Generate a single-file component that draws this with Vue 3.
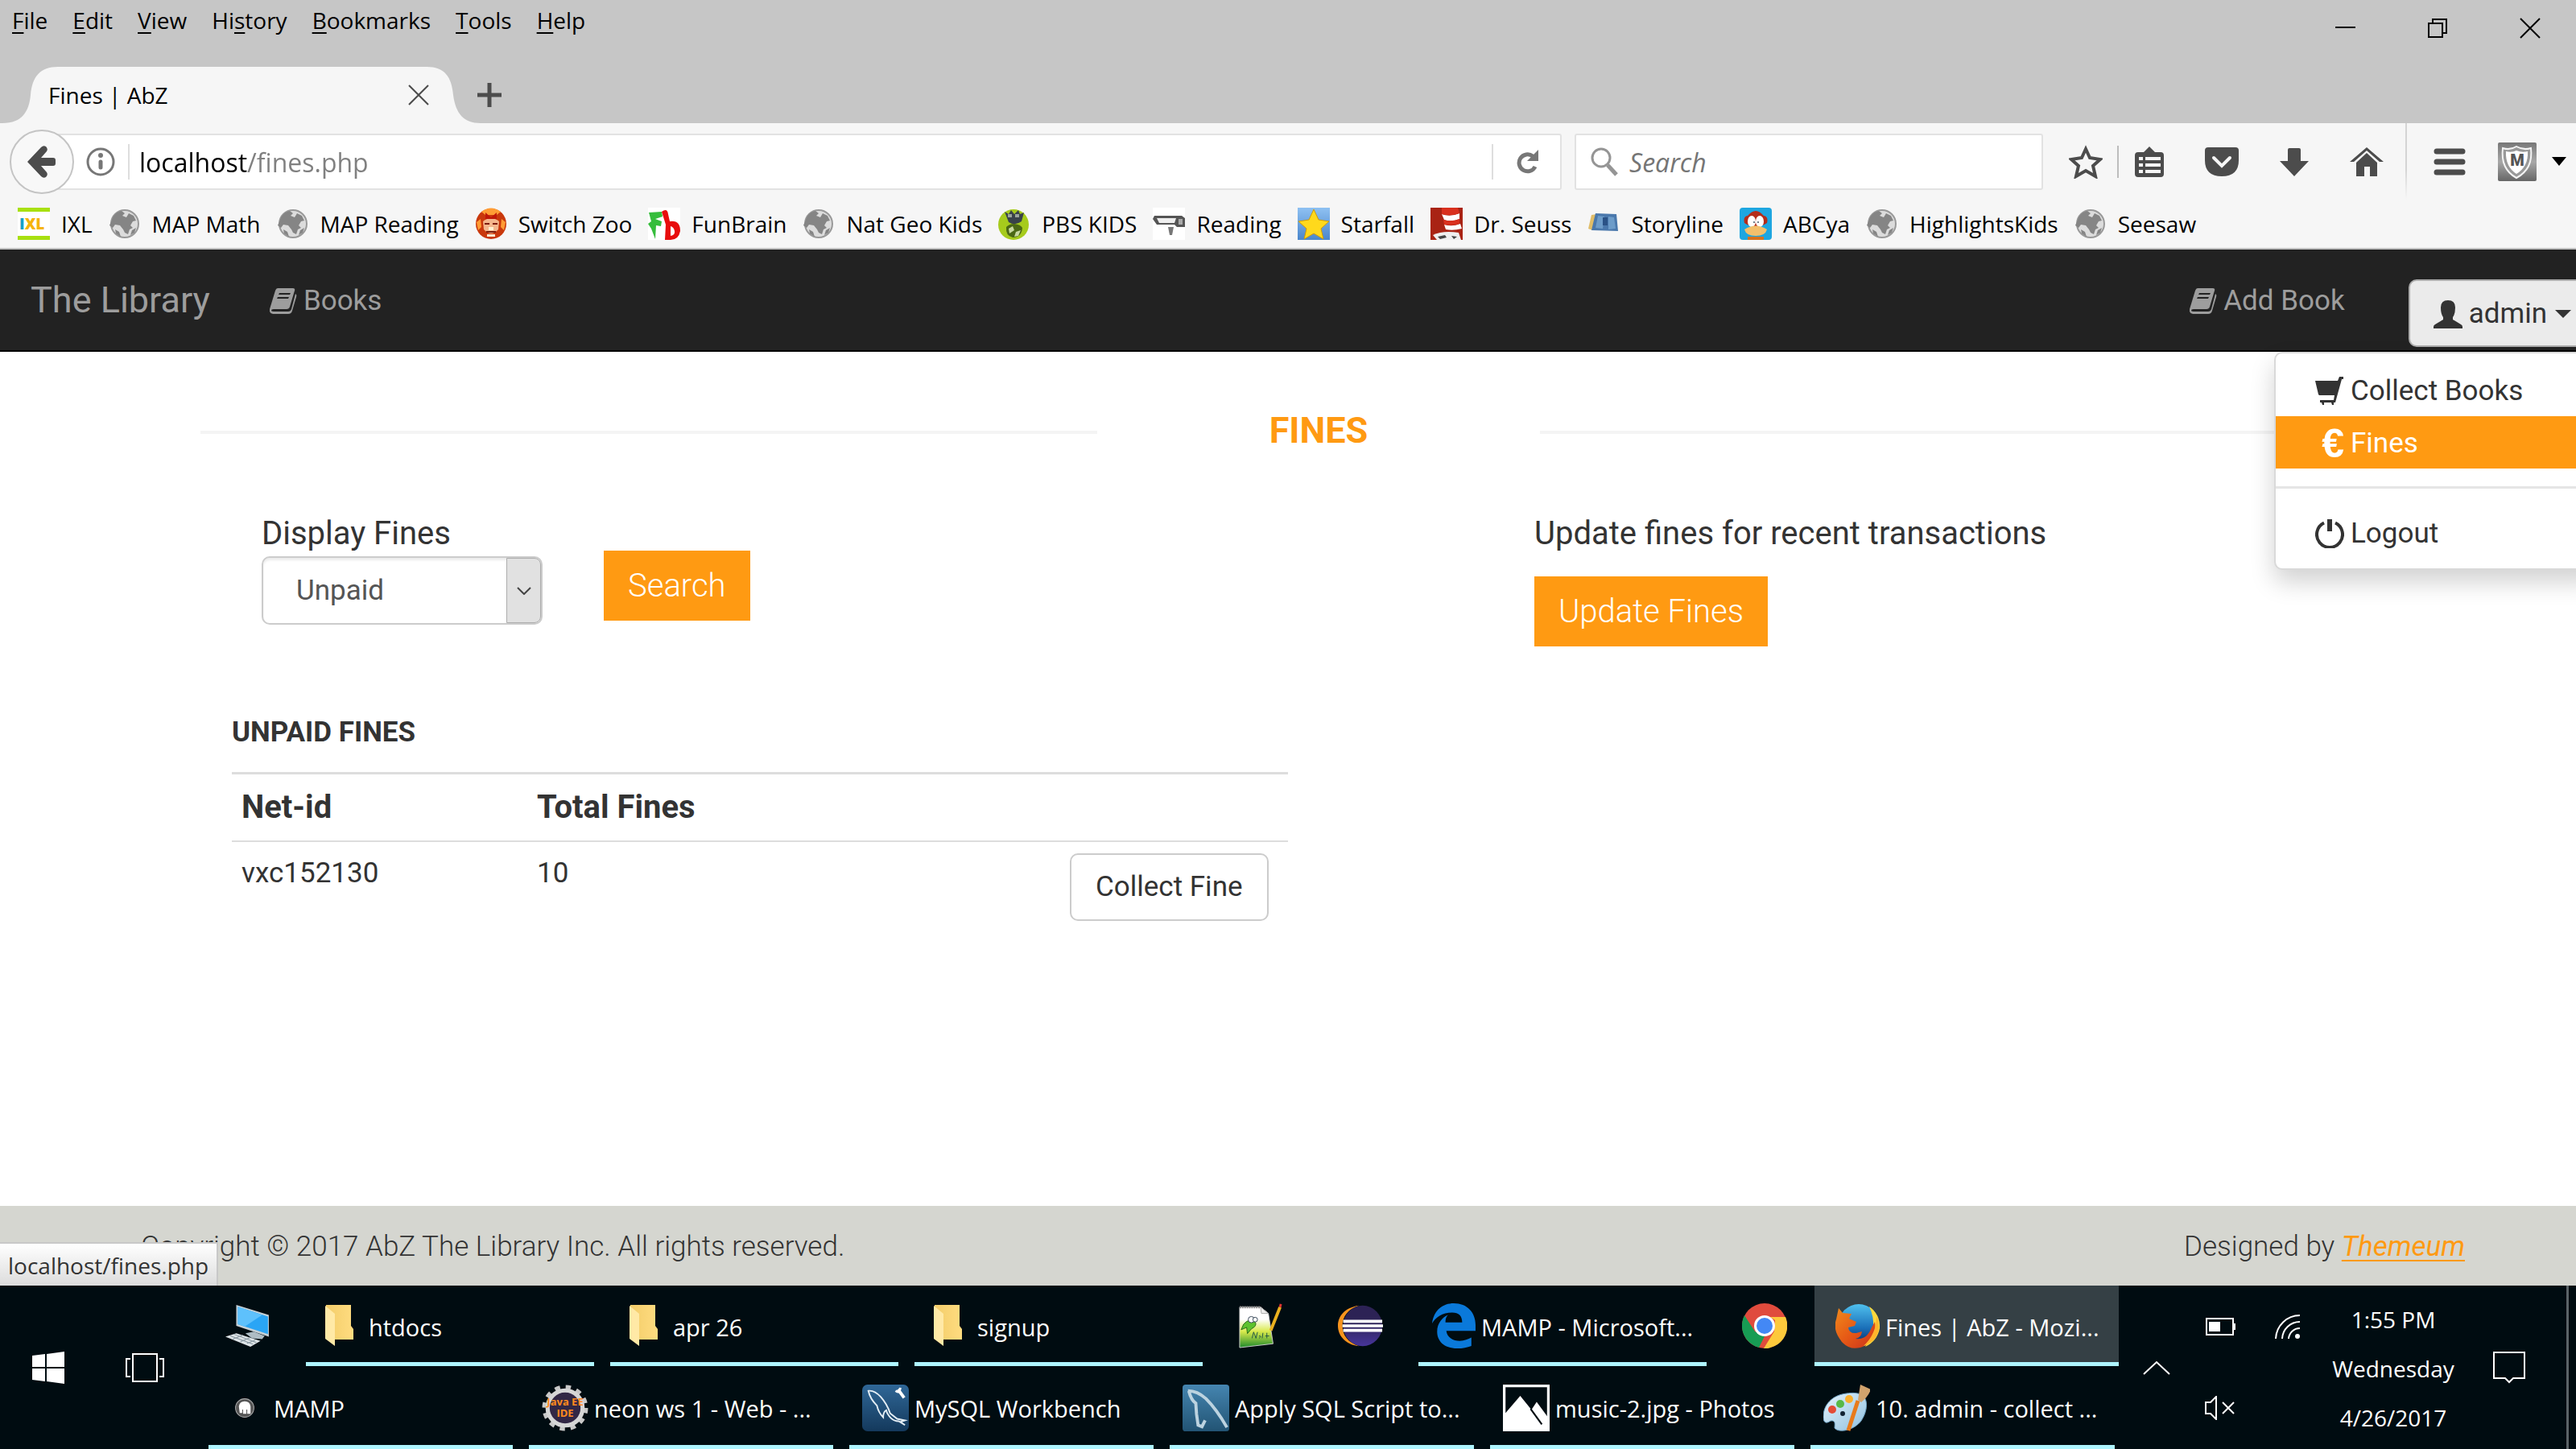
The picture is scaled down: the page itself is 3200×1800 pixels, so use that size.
<script setup>
import { ref } from 'vue'

const menus = [
  ['', 'F', 'ile'], ['', 'E', 'dit'], ['', 'V', 'iew'], ['Hi', 's', 'tory'],
  ['', 'B', 'ookmarks'], ['', 'T', 'ools'], ['', 'H', 'elp'],
]

const bookmarks = [
  { icon: 'ixl', label: 'IXL' },
  { icon: 'globe', label: 'MAP Math' },
  { icon: 'globe', label: 'MAP Reading' },
  { icon: 'zoo', label: 'Switch Zoo' },
  { icon: 'funbrain', label: 'FunBrain' },
  { icon: 'globe', label: 'Nat Geo Kids' },
  { icon: 'pbs', label: 'PBS KIDS' },
  { icon: 'reading', label: 'Reading' },
  { icon: 'starfall', label: 'Starfall' },
  { icon: 'seuss', label: 'Dr. Seuss' },
  { icon: 'storyline', label: 'Storyline' },
  { icon: 'abcya', label: 'ABCya' },
  { icon: 'globe', label: 'HighlightsKids' },
  { icon: 'globe', label: 'Seesaw' },
]

const topTasks = [
  { icon: 'computer', name: 'This PC' },
  { icon: 'folder', label: 'htdocs', open: true, roomy: true },
  { icon: 'folder', label: 'apr 26', open: true, roomy: true },
  { icon: 'folder', label: 'signup', open: true, roomy: true },
  { icon: 'notepad', name: 'Notepad++' },
  { icon: 'eclipse', name: 'Eclipse' },
  { icon: 'edge', label: 'MAMP - Microsoft...', open: true },
  { icon: 'chrome', name: 'Chrome' },
  { icon: 'firefox', label: 'Fines | AbZ - Mozi...', open: true, active: true },
]

const bottomTasks = [
  { icon: 'mamp', label: 'MAMP' },
  { icon: 'javaee', label: 'neon ws 1 - Web - ...' },
  { icon: 'workbench', label: 'MySQL Workbench' },
  { icon: 'sqlscript', label: 'Apply SQL Script to...' },
  { icon: 'photos', label: 'music-2.jpg - Photos' },
  { icon: 'paint', label: '10. admin - collect ...' },
]

const fines = [{ netId: 'vxc152130', total: 10 }]
const address = ref('localhost/fines.php')
const query = ref('')
const status = ref('Unpaid')
</script>

<template>
  <svg class="sprite" aria-hidden="true">
    <defs>
      <linearGradient id="gFolder" x1="0" x2="1"><stop offset="0" stop-color="#f3cd6a" /><stop offset="1" stop-color="#ffdc80" /></linearGradient>
      <linearGradient id="gStar" x1="0" y1="0" x2="0" y2="1"><stop offset="0" stop-color="#8fc1f2" /><stop offset="1" stop-color="#4a86cc" /></linearGradient>
      <linearGradient id="gSql" x1="0" y1="0" x2="0" y2="1"><stop offset="0" stop-color="#2f6797" /><stop offset="1" stop-color="#14395c" /></linearGradient>
      <linearGradient id="gSql2" x1="0" y1="0" x2="0" y2="1"><stop offset="0" stop-color="#4585b0" /><stop offset="1" stop-color="#225474" /></linearGradient>
      <linearGradient id="gFox" x1="0" y1="0" x2="1" y2="1"><stop offset="0" stop-color="#f08a1c" /><stop offset=".5" stop-color="#e65a16" /><stop offset="1" stop-color="#c9301c" /></linearGradient>
      <linearGradient id="gSea" x1="0" y1="0" x2="0" y2="1"><stop offset="0" stop-color="#4fc0ee" /><stop offset=".6" stop-color="#1a6fb8" /><stop offset="1" stop-color="#0b2c63" /></linearGradient>
      <linearGradient id="gNote" x1="0" y1="0" x2="0" y2="1"><stop offset=".3" stop-color="#ffffff" /><stop offset=".6" stop-color="#d9ea4c" /><stop offset="1" stop-color="#1f8a2c" /></linearGradient>
      <linearGradient id="gEcl" x1="0" y1="0" x2="0" y2="1"><stop offset=".4" stop-color="#2c2255" /><stop offset="1" stop-color="#47359a" /></linearGradient>
      <linearGradient id="gShield" x1="0" y1="0" x2="0" y2="1"><stop offset="0" stop-color="#777" /><stop offset=".5" stop-color="#a8a8a8" /><stop offset="1" stop-color="#666" /></linearGradient>
      <linearGradient id="gPal" x1="0" y1="0" x2="1" y2="1"><stop offset="0" stop-color="#e6f3fb" /><stop offset="1" stop-color="#8fc0e0" /></linearGradient>
    </defs>
    <symbol id="ixl" viewBox="0 0 40 40"><path fill="#fff" d="M0 0h40v40H0z" /><path fill="#a8e010" d="M0 0h40v5H0zM0 35h40v5H0z" /></symbol>
    <symbol id="globe" viewBox="0 0 40 40"><circle cx="20" cy="20" r="17" fill="#dcdcdc" stroke="#999" stroke-width="2" /><path fill="#858585" d="M4 15C6 8 11 5 16 4l4 3-3 3 5 2 3-5 6 3 3 6-4 1-3 5 3 3-4 2-2 6-4-2-2-4-4-5-6-1-3 4-4-3zM29 28l5-3-2 6-5 3zM8 27l5 3 2 6-6-4z" /></symbol>
    <symbol id="zoo" viewBox="0 0 40 40"><circle cx="20" cy="20" r="19" fill="#c9380c" /><path fill="#ff9c34" d="M8 5Q20-4 32 5L27 9H13zM2 18l5-4 1 10-4 4zM38 18l-5-4-1 10 4 4z" /><path fill="#f4b68c" d="M10 17q10-8 20 0l-1 10q-9 10-18 0z" /><path fill="#c01808" d="M13 6l7 6 7-6v8H13z" /><path fill="#7d1c0c" d="M12 19h6v2h-6zM22 19h6v2h-6zM14 29h12v2H14z" /><path fill="#fff0d0" d="M17 24h6v4h-6zM15 33h10v3H15z" /></symbol>
    <symbol id="funbrain" viewBox="0 0 40 40"><path fill="#fff" d="M0 0h40v40H0z" /><path fill="#36bd3c" d="M1 6l16-1 1 6-9 3 8 3-1 6-6-1-1 17-5-13-4-6 4-3z" /><path fill="#e80d0d" fill-rule="evenodd" d="M17 5q7-5 8 3l2 9q13-2 13 12-2 11-12 11h-7l1-19zM28 23v12q6-1 5-6-1-5-5-6z" /></symbol>
    <symbol id="pbs" viewBox="0 0 40 40"><circle cx="19" cy="21" r="19" fill="#a6cb1c" /><path fill="#39424a" d="M8 5l5 3 3-5 4 5 5-5 2 5 5-2-3 11q-8 6-16 1z" /><path fill="#9aa49c" d="M12 8h5v4h-5zM21 8h5v4h-5z" /><path fill="#4b6815" d="M10 24q4-4 10-4 8 1 10 5-1 12-12 12-9-2-8-13z" /><path fill="#c8d8a0" d="M13 26l5-3 2 5-6 4zM22 30l6-2-3 7-5 1z" /></symbol>
    <symbol id="reading" viewBox="0 0 40 40"><path fill="#fff" d="M0 0h40v40H0z" /><path fill="#555" d="M2 10h34l4 3v11H30l-3-3H5l-5-7z" /><path fill="#eee" d="M5 13h24l-2 6H8z" /><path fill="#aaa" d="M32 14h5v7h-5z" /><path fill="#777" d="M19 24h7l-2 10h-3z" /></symbol>
    <symbol id="starfall" viewBox="0 0 40 40"><path fill="url(#gStar)" d="M0 0h40v40H0z" /><path fill="#ffd91c" stroke="#cf9b08" stroke-width="1" d="M20 2l6 13 13 2-10 9 3 13-12-7-12 7 3-13L1 17l13-2z" /></symbol>
    <symbol id="seuss" viewBox="0 0 40 40"><path fill="#a92314" d="M0 0h40v40H0z" /><path fill="#fff" d="M14 8q10 4 22-1v7q-10 4-19 1zM17 21q10 3 20-1l2 6q-11 3-20 1z" /><path fill="#d9301e" d="M14 0h20l2 7q-10 4-22 1zM16 15q10 3 20-1v6q-9 3-19 1z" /><path fill="#eee" d="M3 34q12-6 32-3l3 9H8z" /><path fill="#444" d="M9 36l9-2 2 3-8 2zM26 35l7 1-4 3z" /></symbol>
    <symbol id="storyline" viewBox="0 0 40 40"><path fill="#e0bd68" d="M5 9l7-1-6 20-5-2z" /><path fill="#4a78ac" d="M10 7l26 1 2 21-33-1z" /><path fill="#6d9cc9" d="M13 10l8 1-2 15-9-1zM26 11l7 1 2 14-9 1z" /><path fill="#2a5286" d="M19 12h6v10h-6z" /></symbol>
    <symbol id="abcya" viewBox="0 0 40 40"><rect width="40" height="40" rx="4" fill="#1ea6e0" /><path fill="#b52d1a" d="M10 10q10-12 20 0 6 1 4 9-5 4-14 4T6 19q-2-8 4-9z" /><ellipse cx="15" cy="17" rx="5" ry="7" fill="#fff" /><ellipse cx="25" cy="17" rx="5" ry="7" fill="#fff" /><path fill="#f3c06c" d="M6 27q14-9 28 0-2 8-14 8T6 27z" /><path fill="#d8721c" d="M10 36h20v4H10z" /><circle cx="18" cy="18" r="1" fill="#456" /><circle cx="23" cy="18" r="1" fill="#456" /></symbol>

    <symbol id="book" viewBox="0 0 34 32"><path fill="currentColor" fill-rule="evenodd" d="M10 0H29Q32 0 31 3L25 23Q24 26 21 26H5Q2 26 2 28 3 29 5 29H23Q26 29 27 26L32 7Q34 8 33 11L28 28Q27 32 23 32H4Q-1 31 0 26L7 3Q8 0 10 0zM12 6l-1 2h14l1-2zM10 11l-1 2h14l1-2z" /></symbol>
    <symbol id="user" viewBox="0 0 36 35"><path fill="currentColor" d="M18 0q9 0 9 9 0 8-3 12v3l10 6q2 1 2 3v2H0v-2q0-2 2-3l10-6v-3Q9 17 9 9q0-9 9-9z" /></symbol>
    <symbol id="cart" viewBox="0 0 36 35"><path fill="currentColor" d="M0 5H28L30 0H35V3H33L25 32H23V35H21L20 32H11V35H9L8 32H6V29H23L24 23H5L4 22z" /></symbol>
    <symbol id="power" viewBox="0 0 36 36"><path fill="none" stroke="currentColor" stroke-width="4" d="M11 4.500A16 16 0 1 0 25 4.500" /><path fill="currentColor" d="M15 0h6v15h-6z" /></symbol>

    <symbol id="computer" viewBox="0 0 54 50"><path fill="#c5d0d6" d="M13 0l39 12v26L13 25z" /><path fill="#2aa5f5" d="M15 2l36 12v21L15 23z" /><path fill="#5ec1fc" d="M15 2l29 10-21 14-8-3z" /><path fill="#aebcc4" d="M24 34l10-2 13 5-3 4-12-1z" /><path fill="#dfe5e8" d="M0 38l13-4 29 9-12 7z" /><path stroke="#8796a0" fill="none" d="M6 37l27 10M10 35l27 10M9 41l12-5M18 44l12-5M26 46l10-4" /></symbol>
    <symbol id="folder" viewBox="0 0 36 52"><path fill="url(#gFolder)" d="M1 0h31v26l3 4v13H1z" /><path fill="#ffe9a6" d="M0 1l12 10v40L0 42z" /></symbol>
    <symbol id="notepad" viewBox="0 0 56 58"><path fill="url(#gNote)" stroke="#ccc" d="M1 5h27l10 8 6 39L1 57z" /><path fill="#eee" stroke="#aaa" d="M28 5l10 8h-9z" /><path stroke="#888" stroke-dasharray="2 1" stroke-width="3" d="M1 5h27" /><path fill="#5ec22e" stroke="#2b6a18" d="M6 27q8-9 15-3 3 5-5 9l-5 6-1-8-7 3z" /><circle cx="16" cy="21" r="4" fill="#fff" stroke="#345" /><circle cx="21" cy="21" r="3" fill="#fff" stroke="#345" /><path fill="none" stroke="#254" d="M17 45l2-8 3 8 2-8M26 42q4 0 0 3M31 38l-1 7M34 42h5M36 38v7" /><path stroke="#eab01e" stroke-width="4" d="M41 35L53 5" /><path stroke="#d33" stroke-width="3" d="M53 5l1-4" /></symbol>
    <symbol id="eclipse" viewBox="0 0 60 56"><path fill="#f7941e" d="M28 1C8 4 0 16 0 28s9 25 28 27C13 50 6 40 6 28S13 6 28 1z" /><ellipse cx="33" cy="28" rx="26" ry="27" fill="url(#gEcl)" /><path fill="#fff" d="M7 20h52v4H7zM6 26h54v4H6zM7 32h52v4H7z" /></symbol>
    <symbol id="edge" viewBox="0 0 52 54"><path fill="#0a79da" d="M0 24C2 8 13 0 26 0c16 0 26 11 26 26v7H17c1 8 8 12 16 12 6 0 10-2 14-4v10c-5 2-10 3-17 3C14 54 6 45 6 34c0-10 6-17 13-20-3 3-3 6-3 9h20c0-8-4-12-12-12C12 11 4 17 0 24z" /></symbol>
    <symbol id="chrome" viewBox="0 0 56 56"><circle cx="28" cy="28" r="28" fill="#e04b3d" /><path fill="#179c54" d="M3 15L16 35l12 6-7 14A28 28 0 0 1 3 15z" /><path fill="#fdc93c" d="M54 17A28 28 0 0 1 27 56l13-21 1-14-6-4z" /><circle cx="28" cy="28" r="13" fill="#fff" /><circle cx="28" cy="28" r="10" fill="#4388f5" /></symbol>
    <symbol id="firefox" viewBox="0 0 56 56"><circle cx="29" cy="26" r="25" fill="url(#gSea)" /><path fill="#ffd83c" d="M42 4q14 10 13 27-3 16-18 23 8-12 10-24 1-14-5-26z" /><path fill="url(#gFox)" d="M4 6l5 6 11 1-3 6 9 4-2 5-8 2q1 8 10 7l7-2q-1 8-8 9 14 2 20-14l4-7q3 20-11 29-17 9-29-3Q-4 34 1 20z" /><path fill="#ffb42c" d="M51 16q7 16-3 29-8 7-13 8 16-15 16-37z" /></symbol>
    <symbol id="mamp" viewBox="0 0 56 56"><circle cx="28" cy="28" r="11" fill="#555" stroke="#aaa" stroke-width="1" /><path fill="#fff" d="M21 26q1-6 7-6t7 6v9h-4v-5h-1v5h-4v-5h-1v4h-3z" /></symbol>
    <symbol id="javaee" viewBox="0 0 56 56"><circle cx="28" cy="28" r="24" fill="none" stroke="#c8c8c8" stroke-width="7" stroke-dasharray="6 6.560" /><circle cx="28" cy="28" r="21" fill="#322745" stroke="#d6d6d6" stroke-width="5" /></symbol>
    <symbol id="workbench" viewBox="0 0 60 60"><rect width="60" height="60" rx="7" fill="url(#gSql)" /><path fill="none" stroke="#e4eef5" stroke-width="2" d="M8 8q8-1 16 8 8 9 12 21l9 7 10 2-6 2 6 4-8-5q-6 0-10-4-5-5-6-10-4 2-4 9-6-6-8-15Q10 18 8 8z" /><path stroke="#fff" stroke-width="4" d="M46 6l8 11" /><path stroke="#fff" fill="none" stroke-width="3" d="M43 8q5 4 6-4" /></symbol>
    <symbol id="sqlscript" viewBox="0 0 60 60"><rect width="60" height="60" rx="4" fill="url(#gSql2)" /><path fill="none" stroke="#bcd3e0" stroke-width="4" d="M7 8q12 0 23 10 14 14 27 37M8 8q3 12 9 16l1 14 2 14 5 2 4-8" /></symbol>
    <symbol id="photos" viewBox="0 0 54 54"><path fill="none" stroke="#fff" stroke-width="3" d="M1.500 1.500h51v51h-51z" /><path fill="#fff" d="M2 34L20 13l13 16 6-9 14 19v13H2z" /><path stroke="#000c11" stroke-width="2" d="M32 28l13 18" /></symbol>
    <symbol id="paint" viewBox="0 0 58 58"><path fill="url(#gPal)" stroke="#6fa3c4" d="M29 11C11 13 0 25 0 40c0 9 5 8 9 5 7-1 5 5 5 9 6 7 25 2 33-9 8-12 9-27 1-32-5-3-12-3-19-2z" /><circle cx="11" cy="31" r="5" fill="#e34b36" /><circle cx="21" cy="24" r="5" fill="#58b947" /><circle cx="32" cy="18" r="5" fill="#fbb02d" /><circle cx="24" cy="36" r="3" fill="#123" /><path stroke="#e87b1c" stroke-width="5" d="M43 20L31 57" /><path fill="#d1a36d" d="M46 0l13 6q-3 9-12 16l-4-3z" /></symbol>
  </svg>

  <div class="screen">
    <header class="browser">
      <div class="titlebar">
        <div class="menurow">
          <nav class="menus">
            <button v-for="m in menus" :key="m[2]" type="button">{{ m[0] }}<u>{{ m[1] }}</u>{{ m[2] }}</button>
          </nav>
          <div class="wincontrols">
            <button type="button" aria-label="Minimize"><svg width="26" height="26"><path stroke="#000" stroke-width="2" d="M1 12h25" /></svg></button>
            <button type="button" aria-label="Restore"><svg width="26" height="26"><path fill="none" stroke="#000" stroke-width="2" d="M2 7h17v17H2zM7 7V2h17v17h-5" /></svg></button>
            <button type="button" aria-label="Close"><svg width="26" height="26"><path stroke="#000" stroke-width="2" d="M1 1l24 24M25 1L1 25" /></svg></button>
          </div>
        </div>
        <div class="tabs">
          <div class="tab">
            <svg class="tabshape" width="597" height="70"><path fill="#f6f6f6" d="M0 70H3C28 70 36 55 38 35 40 12 50 0 72 0H530C552 0 561 12 563 35 566 58 576 70 597 70z" /></svg>
            <span class="tabtitle">Fines | AbZ</span>
            <button type="button" aria-label="Close tab"><svg width="26" height="26"><path stroke="#4c4c4c" stroke-width="2" d="M1 1l24 24M25 1L1 25" /></svg></button>
          </div>
          <button type="button" aria-label="New tab"><svg width="30" height="30"><path stroke="#4c4c4c" stroke-width="5" d="M15 0v30M0 15h30" /></svg></button>
        </div>
      </div>

      <div class="toolbar">
        <button class="back" type="button" aria-label="Back"><svg width="36" height="40" viewBox="0 0 36 40"><path fill="#4c4c4c" d="M0 20L17 2q3-3 6-1 3 3 1 6l-7 8h15q3 0 3 3v4q0 3-3 3H17l7 8q2 3-1 6-3 2-6-1z" /></svg></button>
        <div class="urlbar">
          <svg width="36" height="36"><circle cx="18" cy="18" r="16" fill="none" stroke="#777" stroke-width="3" /><circle cx="18" cy="10" r="3" fill="#777" /><path stroke="#777" stroke-width="5" stroke-linecap="round" d="M18 18v7" /></svg>
          <i class="rule"></i>
          <input v-model="address" class="address" type="text" aria-label="Address">
          <i class="rule"></i>
          <button class="reload" type="button" aria-label="Reload"><svg width="30" height="30"><path fill="none" stroke="#777" stroke-width="5" d="M22 8A10.500 10.500 0 1 0 25 21" /><path fill="#777" d="M29 0v14H15z" /></svg></button>
        </div>
        <div class="searchbar">
          <svg width="34" height="36"><circle cx="13" cy="13" r="11" fill="none" stroke="#959595" stroke-width="3" /><path stroke="#959595" stroke-width="5" d="M21 22l11 12" /></svg>
          <input v-model="query" type="search" placeholder="Search" aria-label="Search">
        </div>
        <div class="tools">
          <button class="star" type="button" aria-label="Bookmark this page"><svg width="42" height="42" viewBox="0 0 42 42"><path fill="none" stroke="#4c4c4c" stroke-width="4" d="M21 5l5 11 13 2-9 8 3 13-12-7-12 7 3-13-9-8 13-2z" /></svg></button>
          <i class="rule short"></i>
          <button type="button" aria-label="Bookmarks list"><svg width="36" height="38"><path fill="#4c4c4c" fill-rule="evenodd" d="M18 0l7 7h7q4 0 4 4v23q0 4-4 4H4q-4 0-4-4V11q0-4 4-4h7zM5 13v4h5v-4zM13 13v4h19v-4zM5 21v4h5v-4zM13 21v4h19v-4zM5 29v4h5v-4zM13 29v4h19v-4z" /></svg></button>
          <button type="button" aria-label="Pocket"><svg width="42" height="36"><path fill="#4c4c4c" d="M4 0h34q4 0 4 4v12q0 20-21 20T0 16V4q0-4 4-4z" /><path fill="none" stroke="#f6f6f6" stroke-width="4" stroke-linecap="round" d="M11 13l10 10 10-10" /></svg></button>
          <button type="button" aria-label="Downloads"><svg width="36" height="36"><path fill="#4c4c4c" d="M10 3q0-2 2-2h12q2 0 2 2v14h10L18 36 0 17h10z" /></svg></button>
          <button type="button" aria-label="Home"><svg width="42" height="36"><path fill="#4c4c4c" d="M21 0l21 18h-5L21 4 5 18H0zM21 7l13 12v17h-9V24h-7v12H8V19z" /></svg></button>
          <i class="rule tall"></i>
          <button class="burger" type="button" aria-label="Open menu"><svg width="40" height="34"><path stroke="#4c4c4c" stroke-width="7" stroke-linecap="round" d="M4 4h32M4 17h32M4 30h32" /></svg></button>
          <button class="shield" type="button" aria-label="McAfee">
            <svg width="48" height="48"><rect width="48" height="48" rx="2" fill="url(#gShield)" /><path fill="#999" stroke="#f4f4f4" stroke-width="2" d="M6 7q9 3 17-2 9 5 18 2 3 26-18 37Q3 33 6 7z" /><path fill="#fff" d="M10 11q7 2 13-1 7 3 14 1 1 19-14 28Q9 30 10 11z" /><text x="24" y="29" text-anchor="middle" font-family="Roboto, sans-serif" font-weight="900" font-size="20" fill="#555">M</text></svg>
            <svg width="18" height="11"><path fill="#000" d="M0 0h18L9 11z" /></svg>
          </button>
        </div>
      </div>

      <nav class="bookmarks">
        <a v-for="b in bookmarks" :key="b.label" href="#"><svg width="40" height="40"><use :href="'#' + b.icon" /><text v-if="b.icon === 'ixl'" class="ixltext" x="2" y="27">I<tspan fill="#f6b40c">XL</tspan></text></svg>{{ b.label }}</a>
      </nav>
    </header>

    <nav class="sitebar">
      <a class="brand" href="#">The Library</a>
      <a class="navlink" href="#"><svg width="34" height="32"><use href="#book" /></svg>Books</a>
      <a class="navlink add" href="#"><svg width="34" height="32"><use href="#book" /></svg>Add Book</a>
      <div class="account">
        <button class="userbtn" type="button" aria-expanded="true"><svg width="36" height="35"><use href="#user" /></svg>admin<svg class="caret" width="20" height="10"><path fill="currentColor" d="M0 0h20L10 10z" /></svg></button>
        <ul class="dropdown">
          <li><a href="#"><svg width="36" height="35"><use href="#cart" /></svg>Collect Books</a></li>
          <li><a class="current" href="#"><b class="euro">€</b>Fines</a></li>
          <li class="divider"></li>
          <li><a href="#"><svg width="36" height="36"><use href="#power" /></svg>Logout</a></li>
        </ul>
      </div>
    </nav>

    <main>
      <div class="heading"><span class="line"></span><h1>FINES</h1><span class="line"></span></div>
      <div class="forms">
        <form class="filter" @submit.prevent>
          <div class="field">
            <label for="status">Display Fines</label>
            <div class="selectbox">
              <select id="status" v-model="status"><option>Unpaid</option><option>Paid</option></select>
              <span class="arrow"><svg width="18" height="10"><path fill="none" stroke="#444" stroke-width="2" d="M1 1l8 8 8-8" /></svg></span>
            </div>
          </div>
          <button class="primary" type="submit">Search</button>
        </form>
        <form class="update" @submit.prevent>
          <p>Update fines for recent transactions</p>
          <button class="primary" type="submit">Update Fines</button>
        </form>
      </div>
      <section class="unpaid">
        <h2>UNPAID FINES</h2>
        <table>
          <thead><tr><th class="net">Net-id</th><th class="total">Total Fines</th><th></th></tr></thead>
          <tbody>
            <tr v-for="f in fines" :key="f.netId"><td>{{ f.netId }}</td><td>{{ f.total }}</td><td><button class="collect" type="button">Collect Fine</button></td></tr>
          </tbody>
        </table>
      </section>
    </main>

    <footer>
      <span>Copyright © 2017 AbZ The Library Inc. All rights reserved.</span>
      <span>Designed by <a href="#">Themeum</a></span>
      <div class="hoverurl">localhost/fines.php</div>
    </footer>

    <div class="taskbar">
      <button class="start" type="button" aria-label="Start"><svg width="40" height="40"><path fill="#fff" d="M0 5l16-2v16H0zM18 3l22-3v19H18zM0 21h16v16L0 35zM18 21h22v19l-22-3z" /></svg></button>
      <button class="taskview" type="button" aria-label="Task view"><svg width="50" height="38"><path fill="none" stroke="#fff" stroke-width="2" d="M10 2h30v34H10zM7 8H2v22h5M43 8h5v22h-5" /></svg></button>
      <div class="tasks">
        <div class="taskrow top">
          <button v-for="t in topTasks" :key="t.icon + t.label" type="button" :aria-label="t.label || t.name" :class="{ wide: t.label, open: t.open, active: t.active, roomy: t.roomy }"><svg width="56" height="56"><use :href="'#' + t.icon" :x="t.roomy ? 2 : 0" :y="t.roomy ? 2 : 0" :width="t.roomy ? 52 : 56" :height="t.roomy ? 52 : 56" /></svg><span v-if="t.label">{{ t.label }}</span></button>
        </div>
        <div class="taskrow bottom">
          <button v-for="t in bottomTasks" :key="t.icon" type="button" class="wide open"><svg width="58" height="58"><use :href="'#' + t.icon" /><g v-if="t.icon === 'javaee'" class="javatext"><text x="29" y="26">Java EE</text><text x="29" y="40">IDE</text></g></svg><span>{{ t.label }}</span></button>
        </div>
      </div>
      <div class="tray">
        <button type="button" aria-label="Show hidden icons"><svg width="34" height="18"><path fill="none" stroke="#fff" stroke-width="2" d="M1 17L17 2l16 15" /></svg></button>
        <div class="trayicons">
          <svg width="38" height="22"><path fill="none" stroke="#fff" stroke-width="2" d="M2 1h33v20H2z" /><path fill="#fff" d="M5 5h14v12H5zM36 7h2v8h-2z" /></svg>
          <svg width="32" height="32"><path fill="none" stroke="#fff" stroke-width="2" d="M1 31A30 30 0 0 1 31 2M9 31A22 22 0 0 1 31 10M17 31A14 14 0 0 1 31 18" /><circle cx="28" cy="28" r="3" fill="#fff" /></svg>
          <svg width="38" height="30"><path fill="none" stroke="#fff" stroke-width="2" d="M1 8h6l7-7v28l-7-7H1zM22 8l14 14M36 8L22 22" /></svg>
        </div>
        <div class="clock"><span>1:55 PM</span><span>Wednesday</span><span>4/26/2017</span></div>
        <button type="button" aria-label="Notifications"><svg width="40" height="40"><path fill="none" stroke="#fff" stroke-width="2" d="M1 1h38v32H25l-5 5-5-5H1z" /></svg></button>
        <i class="peek"></i>
      </div>
    </div>
  </div>
</template>

<style>
body { margin: 0; }
</style>

<style scoped>
* { box-sizing: border-box; }
button { margin: 0; padding: 0; border: 0; background: none; font: inherit; color: inherit; cursor: pointer; }
svg { flex: none; display: block; }
a { color: inherit; text-decoration: none; }
.sprite { position: absolute; width: 0; height: 0; }

.screen { display: flex; flex-direction: column; min-height: 100vh; overflow: hidden; background: #fff; color: #333; font: 35px/50px Roboto, sans-serif; }

.browser { font: 28px/50px "Open Sans", "Noto Sans", sans-serif; color: #000; background: #f6f6f6; border-bottom: 2px solid #c0c0c0; }
.titlebar { background: #c6c6c6; }
.menurow { display: flex; justify-content: space-between; height: 83px; }
.menus { display: flex; align-items: flex-start; gap: 31px; padding-left: 15px; }
.menus u { text-decoration-thickness: 2px; text-underline-offset: 4px; }
.wincontrols { display: flex; height: 70px; }
.wincontrols button { width: 115px; display: grid; place-items: center; }
.tabs { display: flex; align-items: center; height: 70px; }
.tab { position: relative; display: flex; align-items: center; justify-content: space-between; width: 593px; height: 70px; padding: 0 60px; }
.tabshape { position: absolute; left: 0; top: 0; }
.tabtitle, .tab button { position: relative; }

.toolbar { display: flex; align-items: center; height: 95px; padding-left: 12px; }
.back { position: relative; z-index: 1; display: grid; place-items: center; width: 80px; height: 80px; margin-right: -24px; border: 2px solid #c4c4c4; border-radius: 50%; background: #f8f8f8; }
.urlbar, .searchbar { display: flex; align-items: center; height: 70px; border: 2px solid #e2e2e2; border-radius: 3px; background: #fff; }
.urlbar { flex: 1; padding-left: 37px; }
.rule { flex: none; width: 2px; height: 44px; background: #dedede; }
.urlbar svg + .rule { margin-left: 16px; }
input { flex: 1; min-width: 0; height: 60px; padding: 2px 0 0; border: 0; outline: 0; font: 32px "Open Sans", "Noto Sans", sans-serif; background: none; }
.address { margin-left: 12px; color: transparent; background: linear-gradient(90deg, #000 134px, #808080 134px); background-clip: text; -webkit-background-clip: text; }
.reload { display: grid; place-items: center; width: 83px; height: 60px; }
.searchbar { width: 582px; margin-left: 16px; padding-left: 18px; gap: 14px; }
.searchbar input::placeholder { color: #757575; font-style: italic; opacity: 1; }
.tools { display: flex; align-items: center; height: 95px; }
.tools button { display: grid; place-items: center; width: 90px; height: 60px; }
.tools .star { width: 78px; margin-left: 14px; }
.rule.short { height: 40px; margin-right: -7px; background: #bdbdbd; }
.rule.tall { height: 95px; margin-left: 3px; background: linear-gradient(#d4d4d4 60%, #f6f6f6); }
.tools .burger { width: 106px; }
.tools .shield { display: flex; align-items: center; gap: 19px; width: 85px; margin: 0 12px 0 7px; }
.bookmarks { display: flex; align-items: center; gap: 20px; height: 60px; padding-left: 22px; white-space: nowrap; }
.bookmarks a { display: flex; align-items: center; gap: 14px; }
.ixltext { font: 800 19px "Open Sans", sans-serif; fill: #18a0c8; }

.sitebar { position: relative; z-index: 2; display: flex; align-items: center; height: 127px; padding-left: 38px; border-bottom: 2px solid #000; background: #222; color: #9d9d9d; }
.brand { font-size: 45px; margin-right: 74px; }
.navlink { display: flex; align-items: center; gap: 8px; padding-top: 2px; }
.navlink.add { margin-left: auto; margin-right: 79px; }
.account { position: relative; align-self: flex-end; margin: 0 -25px 4px 0; color: #333; }
.userbtn { display: flex; align-items: center; height: 84px; padding: 2px 29px 0; gap: 8px; border: 2px solid #adadad; border-radius: 10px; background: #ebebeb; }
.caret { margin-left: 2px; }
.dropdown { position: absolute; top: 90px; right: -4px; width: 404px; height: 271px; margin: 0; padding: 13px 0; list-style: none; background: #fff; border: 2px solid #d9d9d9; border-radius: 10px; box-shadow: 0 15px 30px rgba(0, 0, 0, .18); }
.dropdown a { display: flex; align-items: center; gap: 8px; height: 65px; padding: 2px 0 0 49px; }
.dropdown a.current { background: #ff9a12; color: #fff; }
.euro { width: 36px; font-family: "Liberation Sans", sans-serif; font-size: 50px; text-align: right; }
.divider { height: 3px; margin: 22px 0; background: #e5e5e5; }

main { flex: 1; padding-top: 73px; }
.heading { display: grid; grid-template-columns: 203fr 100fr 203fr; align-items: center; margin: 0 173px 0 249px; }
.line { height: 4px; background: #f4f4f4; }
h1 { margin: 0; padding-bottom: 4px; font-size: 45px; line-height: 50px; text-align: center; color: #ff9a12; }
.forms { display: grid; grid-template-columns: 1581fr 1123fr; align-items: start; margin: 70px 171px 0 325px; font-size: 40px; line-height: 57px; }
.filter { display: flex; align-items: flex-end; gap: 76px; }
.filter .primary { margin-bottom: 5px; }
.field { width: 349px; }
label { display: block; }
.selectbox { position: relative; }
select { display: block; width: 100%; height: 85px; padding: 0 41px; appearance: none; border: 2px solid #ccc; border-radius: 10px; background: #fff; box-shadow: inset 0 3px 3px rgba(0, 0, 0, .08); color: #555; font: 35px Roboto, sans-serif; }
.arrow { position: absolute; top: 2px; right: 2px; bottom: 2px; width: 43px; display: grid; place-items: center; border: 1px solid #adadad; border-radius: 0 8px 8px 0; background: #e1e1e1; pointer-events: none; }
.primary { padding: 15px 30px; background: #ff9a12; color: #fff; font-weight: 300; }
p { margin: 0 0 25px; }
.unpaid { width: 41%; margin: 82px 0 0 288px; }
h2 { margin: 0 0 24px; font-size: 35px; line-height: 50px; }
table { width: 100%; table-layout: fixed; border-collapse: separate; border-spacing: 0; text-align: left; }
th { padding: 12px 12px 13px; border-top: 3px solid #ddd; border-bottom: 2px solid #ddd; font-size: 40px; line-height: 57px; }
td { padding: 14px 12px 12px; vertical-align: top; }
.net { width: 367px; }
.total { width: 662px; }
.collect { padding: 15px 30px; border: 2px solid #ccc; border-radius: 10px; background: #fff; }

footer { position: relative; display: flex; justify-content: space-between; padding: 26px 138px 23px 175px; background: #d5d6d0; font-weight: 300; }
footer a { color: #ff9a12; font-style: italic; font-weight: 400; text-decoration: underline; text-decoration-thickness: 2px; text-underline-offset: 5px; }
.hoverurl { position: absolute; left: 0; bottom: 0; padding: 2px 10px 0; border-top: 2px solid #c8c8c8; border-right: 2px solid #c8c8c8; background: linear-gradient(#fff, #dcdcdc); font: 28px/50px "Open Sans", "Noto Sans", sans-serif; }

.taskbar { display: flex; align-items: center; background: #000c11; color: #fff; font: 28px/61px "Open Sans", "Noto Sans", sans-serif; white-space: nowrap; }
.start { margin-left: 40px; }
.taskview { margin-left: 75px; }
.tasks { flex: 1; min-width: 0; margin-left: 41px; font-size: 29px; }
.taskrow { display: flex; }
.taskrow span { padding-top: 2px; }
.taskrow button { position: relative; flex: none; display: flex; align-items: center; justify-content: center; width: 124px; }
.taskrow .wide { justify-content: flex-start; width: 378px; padding-left: 26px; gap: 6px; }
.top button { height: 100px; }
.top .roomy { padding-left: 24px; gap: 8px; }
.bottom { padding-left: 3px; }
.bottom .wide { height: 103px; width: 398px; gap: 7px; }
.javatext { font: 700 13px "Open Sans", sans-serif; fill: #ff8a1e; text-anchor: middle; }
.open::after { content: ""; position: absolute; left: 10px; right: 10px; bottom: 0; height: 5px; background: #aef5ff; }
.active { background: #354045; }
.active::after { left: 0; right: 0; }
.tray { display: flex; align-items: center; }
.trayicons { display: grid; grid-template-columns: 38px 32px; grid-template-rows: 101px 102px; column-gap: 49px; align-items: center; margin: 0 37px 0 43px; }
.clock { display: flex; flex-direction: column; align-items: center; width: 156px; margin-right: 46px; padding-top: 3px; }
.peek { align-self: stretch; width: 3px; margin: 0 9px 0 51px; background: #5c6468; }
</style>
